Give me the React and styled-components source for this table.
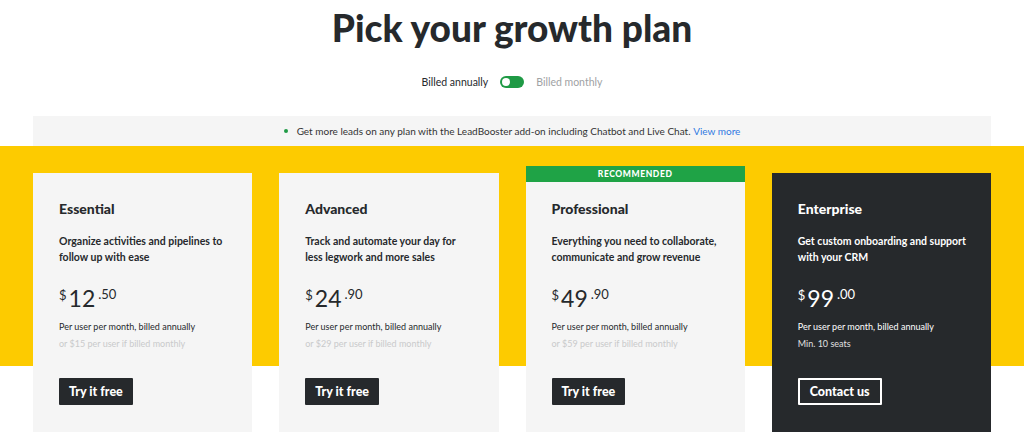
import React from 'react';
import styled, { createGlobalStyle } from 'styled-components';

const GlobalStyle = createGlobalStyle`
  * { box-sizing: border-box; }
  body {
    margin: 0;
    background: #fff;
    font-family: 'Lato', 'Open Sans', sans-serif;
    color: #26292c;
  }
`;

const plans = [
  {
    name: 'Essential',
    desc: ['Organize activities and pipelines to', 'follow up with ease'],
    whole: '12',
    cents: '.50',
    note: 'or $15 per user if billed monthly',
    cta: 'Try it free',
  },
  {
    name: 'Advanced',
    desc: ['Track and automate your day for', 'less legwork and more sales'],
    whole: '24',
    cents: '.90',
    note: 'or $29 per user if billed monthly',
    cta: 'Try it free',
  },
  {
    name: 'Professional',
    desc: ['Everything you need to collaborate,', 'communicate and grow revenue'],
    whole: '49',
    cents: '.90',
    note: 'or $59 per user if billed monthly',
    cta: 'Try it free',
    recommended: true,
  },
  {
    name: 'Enterprise',
    desc: ['Get custom onboarding and support', 'with your CRM'],
    whole: '99',
    cents: '.00',
    note: 'Min. 10 seats',
    cta: 'Contact us',
    dark: true,
  },
];

const App = () => {
  return (
    <Page>
      <GlobalStyle />
      <Title>Pick your growth plan</Title>
      <Billing>
        <span className='active'>Billed annually</span>
        <Switch />
        <span>Billed monthly</span>
      </Billing>
      <Banner>
        <Dot />
        Get more leads on any plan with the LeadBooster add-on including Chatbot and Live Chat.{' '}
        <a href='#'>View more</a>
      </Banner>
      <Plans>
        {plans.map((plan) => (
          <Card key={plan.name} $dark={plan.dark}>
            {plan.recommended && <Badge>Recommended</Badge>}
            <PlanName>{plan.name}</PlanName>
            <Desc>
              {plan.desc[0]}
              <br />
              {plan.desc[1]}
            </Desc>
            <Price>
              <span className='cur'>$</span>
              <span className='whole'>{plan.whole}</span>
              <span className='cents'>{plan.cents}</span>
            </Price>
            <Per>Per user per month, billed annually</Per>
            <Note $dark={plan.dark}>{plan.note}</Note>
            <Button $outline={plan.dark}>{plan.cta}</Button>
          </Card>
        ))}
      </Plans>
    </Page>
  );
};

const Page = styled.main`
  width: 1024px;
  height: 439px;
  overflow: hidden;
`;

const Title = styled.h1`
  margin: 0;
  padding-top: 5px;
  font-size: 37px;
  line-height: 46px;
  font-weight: 900;
  text-align: center;
  color: #26292c;
`;

const Billing = styled.div`
  margin-top: 23px;
  display: flex;
  justify-content: center;
  align-items: center;
  gap: 12px;
  height: 16px;
  font-size: 10.5px;
  color: #a0a2a4;

  .active {
    color: #26292c;
  }
`;

const Switch = styled.span`
  position: relative;
  width: 24px;
  height: 12px;
  border-radius: 6px;
  background: #1f9a45;

  &::after {
    content: '';
    position: absolute;
    left: 2px;
    top: 2px;
    width: 8px;
    height: 8px;
    border-radius: 50%;
    background: #fff;
  }
`;

const Banner = styled.div`
  margin: 26px 33px 0;
  height: 30px;
  background: #f5f5f5;
  display: flex;
  justify-content: center;
  align-items: center;
  font-size: 10px;
  color: #333;
  white-space: pre;

  a {
    color: #317ae2;
    text-decoration: none;
  }
`;

const Dot = styled.span`
  width: 4px;
  height: 4px;
  border-radius: 50%;
  background: #1f9a45;
  margin-right: 9px;
`;

const Plans = styled.section`
  display: grid;
  grid-template-columns: repeat(4, minmax(0, 1fr));
  gap: 27px;
  padding: 27px 33px 0;
  background: linear-gradient(to bottom, #fdcb00 0, #fdcb00 220px, #fff 220px);
`;

const Card = styled.article`
  position: relative;
  height: 259px;
  padding: 26px 26px 27px;
  display: flex;
  flex-direction: column;
  align-items: flex-start;
  background: ${(p) => (p.$dark ? '#26292c' : '#f5f5f5')};
  color: ${(p) => (p.$dark ? '#fff' : '#26292c')};
`;

const Badge = styled.div`
  position: absolute;
  left: 0;
  right: 0;
  top: -7px;
  height: 16px;
  background: #1fa346;
  color: #fff;
  font-size: 8.5px;
  font-weight: 900;
  letter-spacing: 0.6px;
  text-transform: uppercase;
  display: flex;
  justify-content: center;
  align-items: center;
`;

const PlanName = styled.h3`
  margin: 0;
  font-size: 14px;
  line-height: 20px;
  font-weight: 900;
`;

const Desc = styled.p`
  margin: 14px 0 0;
  font-size: 10.5px;
  line-height: 16px;
  font-weight: 700;
  white-space: nowrap;
`;

const Price = styled.div`
  margin-top: 18px;
  height: 30px;
  display: flex;
  align-items: flex-start;

  .cur {
    font-size: 13px;
    margin-top: 4px;
    margin-right: 2px;
  }
  .whole {
    font-size: 23px;
    line-height: 30px;
  }
  .cents {
    font-size: 13px;
    margin-top: 3px;
    margin-left: 3px;
  }
`;

const Per = styled.p`
  margin: 5px 0 0;
  font-size: 9px;
  line-height: 17px;
`;

const Note = styled.p`
  margin: 0;
  font-size: 9px;
  line-height: 17px;
  color: ${(p) => (p.$dark ? '#e0e0e0' : '#c9cacb')};
`;

const Button = styled.button`
  margin-top: auto;
  height: 27px;
  padding: 0 10px;
  font-family: inherit;
  font-size: 12.5px;
  font-weight: 900;
  color: #fff;
  background: #26292c;
  border: ${(p) => (p.$outline ? '2px solid #fff' : 'none')};
  border-radius: 1px;
  cursor: pointer;
`;

export default App;
